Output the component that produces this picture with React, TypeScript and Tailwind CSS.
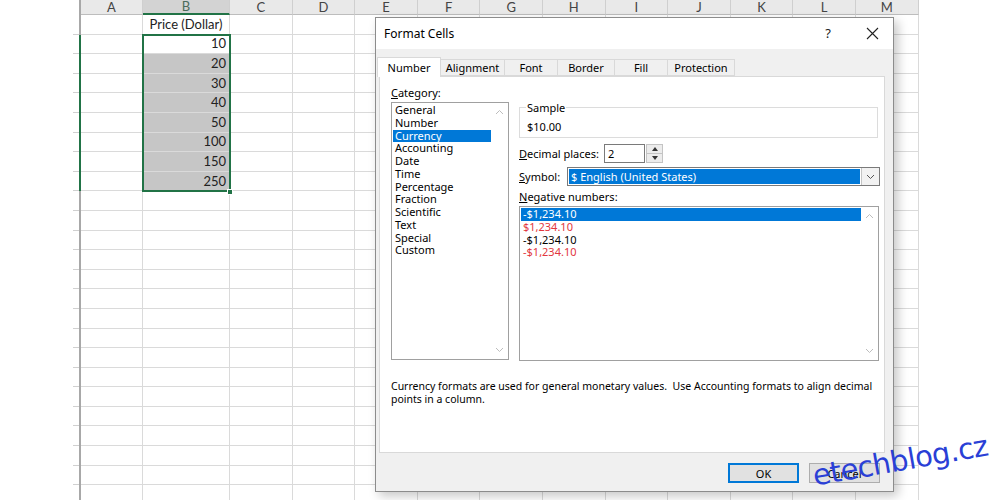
import React from 'react';

const columns = [
  { label: 'A', w: 'w-[62px]' },
  { label: 'B', w: 'w-[87px]' },
  { label: 'C', w: 'w-[62.6px]' },
  { label: 'D', w: 'w-[62.6px]' },
  { label: 'E', w: 'w-[62.6px]' },
  { label: 'F', w: 'w-[62.6px]' },
  { label: 'G', w: 'w-[62.6px]' },
  { label: 'H', w: 'w-[62.6px]' },
  { label: 'I', w: 'w-[62.6px]' },
  { label: 'J', w: 'w-[62.6px]' },
  { label: 'K', w: 'w-[62.6px]' },
  { label: 'L', w: 'w-[62.6px]' },
  { label: 'M', w: 'w-[62.6px]' },
];

const priceColumn = ['Price (Dollar)', '10', '20', '30', '40', '50', '100', '150', '250'];

const categories = [
  'General',
  'Number',
  'Currency',
  'Accounting',
  'Date',
  'Time',
  'Percentage',
  'Fraction',
  'Scientific',
  'Text',
  'Special',
  'Custom',
];

const negatives = [
  { text: '-$1,234.10', color: 'text-white', selected: true },
  { text: '$1,234.10', color: 'text-[#e2373d]' },
  { text: '-$1,234.10', color: 'text-black' },
  { text: '-$1,234.10', color: 'text-[#e2373d]' },
];

const tabs = [
  { label: 'Number', w: 'w-[64px]', active: true },
  { label: 'Alignment', w: 'w-[64px]' },
  { label: 'Font', w: 'w-[53px]' },
  { label: 'Border', w: 'w-[57px]' },
  { label: 'Fill', w: 'w-[53px]' },
  { label: 'Protection', w: 'w-[67px]' },
];

const ROWS = 25;

function Chevron({ up }: { up?: boolean }) {
  return (
    <svg width="9" height="6" viewBox="0 0 9 6" fill="none" stroke="#bdbdbd" strokeWidth="1">
      <path d={up ? 'M1 5L4.5 1.5L8 5' : 'M1 1L4.5 4.5L8 1'} />
    </svg>
  );
}

function ScrollBar() {
  return (
    <div className="w-[17px] flex flex-col items-center justify-between py-[6px] bg-white">
      <Chevron up />
      <Chevron />
    </div>
  );
}

function Sheet() {
  return (
    <div className="flex font-['Lato',sans-serif] text-[13px] text-[#222]">
      <div className="w-[79px] shrink-0">
        <div className="h-[15px]" />
        {Array.from({ length: ROWS }).map((_, r) => (
          <div key={r} className="h-[19.6px] flex justify-end">
            <div className="w-[6px] h-full border-b border-[#d0d0d0]" />
          </div>
        ))}
      </div>

      <div className="relative">
        <div className="flex h-[15px] border-l-2 border-[#a8a8a8]">
          {columns.map((c) => (
            <div
              key={c.label}
              className={`${c.w} flex items-center justify-center leading-none border-r border-[#cfcfcf] ${
                c.label === 'B'
                  ? 'bg-[#d3d3d3] border-b-2 border-b-[#217346] text-[#4b6b5a]'
                  : 'bg-[#e9e9e9] border-b border-b-[#bdbdbd] text-[#444]'
              }`}
            >
              {c.label}
            </div>
          ))}
        </div>

        {Array.from({ length: ROWS }).map((_, r) => {
          const inSel = r >= 1 && r <= 8;
          return (
            <div
              key={r}
              className={`flex h-[19.6px] border-l-2 ${inSel ? 'border-[#217346]' : 'border-[#a8a8a8]'}`}
            >
              {columns.map((c) => {
                const isB = c.label === 'B';
                const val = isB ? priceColumn[r] : undefined;
                const grey = isB && r >= 2 && r <= 8;
                return (
                  <div
                    key={c.label}
                    className={`${c.w} flex items-center border-r border-b border-[#dadada] leading-none ${
                      grey ? 'bg-[#c6c6c6]' : ''
                    } ${r === 0 ? 'justify-center' : 'justify-end pr-[3px]'}`}
                  >
                    {val}
                  </div>
                );
              })}
            </div>
          );
        })}

        <div className="absolute left-[63px] top-[33.6px] w-[89px] h-[158.8px] border-2 border-[#217346]" />
        <div className="absolute left-[148px] top-[189px] w-[6px] h-[6px] bg-[#217346] border border-white" />
      </div>
    </div>
  );
}

function Dialog() {
  return (
    <div className="absolute left-[375px] top-[17px] w-[519px] h-[475px] flex flex-col bg-[#f0f0f0] border border-[#8c8c8c] shadow-[4px_4px_10px_rgba(0,0,0,0.22)] font-['Noto_Sans',sans-serif] text-[11px] leading-[13px] text-black">
      <div className="h-[31px] shrink-0 bg-white flex items-center pl-[8px] pr-[14px]">
        <span className="text-[12px]">Format Cells</span>
        <span className="ml-auto text-[13px] text-[#222]">?</span>
        <svg className="ml-[35px]" width="13" height="13" viewBox="0 0 13 13" stroke="#222" strokeWidth="1.1">
          <path d="M1 1L12 12M12 1L1 12" />
        </svg>
      </div>

      <div className="h-[27px] shrink-0 flex items-end pl-[1px]">
        {tabs.map((t) =>
          t.active ? (
            <div
              key={t.label}
              className={`${t.w} h-[20px] -mb-px z-10 bg-white border border-b-0 border-[#d9d9d9] flex items-center justify-center`}
            >
              {t.label}
            </div>
          ) : (
            <div
              key={t.label}
              className={`${t.w} h-[17px] bg-[#f0f0f0] border border-l-0 border-[#d9d9d9] flex items-center justify-center`}
            >
              {t.label}
            </div>
          )
        )}
      </div>

      <div className="ml-[3px] w-[506px] h-[377px] shrink-0 bg-white border border-[#d9d9d9] pt-[9px] pl-[11px]">
        <div className="flex items-start">
          <div className="w-[118px] flex flex-col">
            <span>
              <u>C</u>ategory:
            </span>
            <div className="mt-[3px] h-[258px] flex border border-[#a0a0a0] bg-white">
              <div className="flex-1 pt-[1px] pl-px">
                {categories.map((c) => (
                  <div
                    key={c}
                    className={`h-[12.75px] leading-[12.75px] pl-[2px] ${
                      c === 'Currency' ? 'bg-[#0078d7] text-white' : ''
                    }`}
                  >
                    {c}
                  </div>
                ))}
              </div>
              <ScrollBar />
            </div>
          </div>

          <div className="ml-[10px] w-[361px] flex flex-col">
            <fieldset className="mt-[15px] w-[359px] border border-[#dcdcdc] pl-[7px] pb-[4px]">
              <legend className="ml-[-1px] px-px">Sample</legend>
              <div className="pt-[6px]">$10.00</div>
            </fieldset>

            <div className="mt-[6px] flex items-center h-[19px]">
              <span className="w-[85px]">
                <u>D</u>ecimal places:
              </span>
              <div className="w-[41px] h-[19px] border border-[#7a7a7a] flex items-center pl-[3px]">2</div>
              <div className="ml-px w-[17px] h-[19px] border border-[#c4c4c4] bg-[#ececec] flex flex-col">
                <div className="flex-1 flex items-center justify-center border-b border-[#c4c4c4]">
                  <svg width="6" height="4" viewBox="0 0 6 4">
                    <path d="M0 4L3 0L6 4Z" fill="#333" />
                  </svg>
                </div>
                <div className="flex-1 flex items-center justify-center">
                  <svg width="6" height="4" viewBox="0 0 6 4">
                    <path d="M0 0L6 0L3 4Z" fill="#333" />
                  </svg>
                </div>
              </div>
            </div>

            <div className="mt-[4px] flex items-center h-[19px]">
              <span className="w-[48px]">
                <u>S</u>ymbol:
              </span>
              <div className="w-[313px] h-[19px] border border-[#7a7a7a] flex">
                <div className="flex-1 m-px bg-[#0078d7] text-white flex items-center pl-[2px]">
                  $ English (United States)
                </div>
                <div className="w-[18px] border-l border-[#c4c4c4] bg-[#f2f2f2] flex items-center justify-center">
                  <svg width="9" height="6" viewBox="0 0 9 6" fill="none" stroke="#555" strokeWidth="1">
                    <path d="M1 1L4.5 4.5L8 1" />
                  </svg>
                </div>
              </div>
            </div>

            <span className="mt-[4px]">
              <u>N</u>egative numbers:
            </span>
            <div className="mt-[3px] w-[360px] h-[155px] flex border border-[#a0a0a0] bg-white">
              <div className="flex-1 pt-px pl-px">
                {negatives.map((n, i) => (
                  <div
                    key={i}
                    className={`h-[12.75px] leading-[12.75px] pl-[2px] ${n.color} ${
                      n.selected ? 'bg-[#0078d7]' : ''
                    }`}
                  >
                    {n.text}
                  </div>
                ))}
              </div>
              <ScrollBar />
            </div>
          </div>
        </div>

        <p className="mt-[19px] w-[492px] text-[10.5px]">
          Currency formats are used for general monetary values.&nbsp; Use Accounting formats to align decimal
          points in a column.
        </p>
      </div>

      <div className="mt-[10px] flex justify-end gap-[10px] pr-[13px]">
        <button className="w-[71px] h-[20px] bg-[#e1e1e1] border-2 border-[#0078d7] flex items-center justify-center">
          OK
        </button>
        <button className="w-[71px] h-[20px] bg-[#e1e1e1] border border-[#adadad] flex items-center justify-center">
          Cancel
        </button>
      </div>
    </div>
  );
}

export default function App() {
  return (
    <div className="relative w-[1000px] h-[500px] overflow-hidden bg-white">
      <Sheet />
      <Dialog />
      <div className="absolute left-[813px] top-[462px] origin-left rotate-[-10deg] font-['DejaVu_Sans',sans-serif] text-[29px] leading-none text-[#2a3fd6] tracking-[-0.6px]">
        etechblog.cz
      </div>
    </div>
  );
}
